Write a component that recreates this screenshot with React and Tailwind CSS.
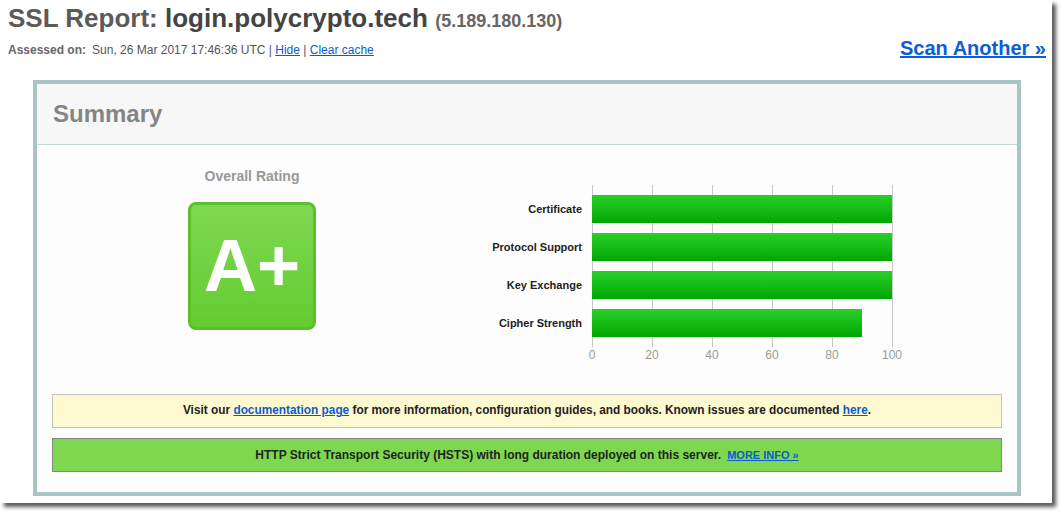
import React from 'react'

const bars = [
  { label: 'Certificate', value: 100 },
  { label: 'Protocol Support', value: 100 },
  { label: 'Key Exchange', value: 100 },
  { label: 'Cipher Strength', value: 90 },
]

const ticks = [0, 20, 40, 60, 80, 100]

const Chart = () => {
  return (
    <div className="flex mt-[17px]">
      {/* labels */}
      <div className="w-[125px] flex flex-col pt-[10px] pr-[10px]">
        {bars.map((b) => (
          <div key={b.label} className="h-[28px] mb-[10px] flex items-center justify-end text-[11px] font-bold text-[#222]">
            {b.label}
          </div>
        ))}
      </div>
      {/* plot */}
      <div className="flex flex-col">
        <div className="relative w-[300px] h-[162px]">
          {ticks.map((t) => (
            <div key={t} className="absolute top-0 bottom-0 w-px bg-[#c8c8c8]" style={{ left: `${t * 3}px` }} />
          ))}
          <div className="relative flex flex-col pt-[10px]">
            {bars.map((b) => (
              <div key={b.label} className="h-[28px] mb-[10px] bg-gradient-to-b from-[#26d126] to-[#00a600]" style={{ width: `${b.value * 3}px` }} />
            ))}
          </div>
        </div>
        <div className="relative h-[16px] w-[300px]">
          {ticks.map((t) => (
            <span key={t} className="absolute top-[1px] -translate-x-1/2 text-[12px] text-[#9a9a9a] leading-[14px]" style={{ left: `${t * 3}px` }}>
              {t}
            </span>
          ))}
        </div>
      </div>
    </div>
  )
}

const App = () => {
  return (
    <div className="w-[1062px] h-[515px] bg-white font-['Liberation_Sans',Arial,sans-serif]">
      <div className="relative w-[1052px] h-[503px] bg-white shadow-[4px_4px_4px_rgba(0,0,0,0.65)]">
        {/* header */}
        <div className="flex justify-between pl-[8px] pr-[6px]">
          <div className="flex flex-col">
            <h1 className="mt-[3px] text-[26px] font-bold leading-[30px] text-[#5b5b5b] whitespace-nowrap">
              SSL Report: <span className="text-[#444]">login.polycrypto.tech</span>{' '}
              <span className="text-[18px] text-[#666]">(5.189.180.130)</span>
            </h1>
            <div className="mt-[7px] text-[12px] leading-[15px] text-[#666] whitespace-nowrap">
              <span className="font-bold">Assessed on:</span>
              <span className="ml-[6px] text-[#555]">Sun, 26 Mar 2017 17:46:36 UTC</span>
              <span className="text-[#555]"> | </span>
              <a href="#" className="text-[#0a5ccc] underline">Hide</a>
              <span className="text-[#555]"> | </span>
              <a href="#" className="text-[#0a5ccc] underline">Clear cache</a>
            </div>
          </div>
          <a href="#" className="mt-[36px] text-[20px] font-bold leading-[24px] text-[#0b5ed7] underline h-[24px] whitespace-nowrap">
            Scan Another »
          </a>
        </div>

        {/* summary box */}
        <div className="ml-[33px] mt-[20px] w-[988px] h-[416px] border-[4px] border-[#a7c4c6] bg-[#fdfdfd] flex flex-col">
          <div className="h-[61px] bg-[#f7f7f7] border-b border-[#c4d8d8] flex items-center pl-[16px]">
            <h2 className="text-[24px] font-bold text-[#858585] leading-none">Summary</h2>
          </div>

          <div className="flex h-[249px] pt-[23px]">
            <div className="w-[430px] flex flex-col items-center">
              <div className="text-[14px] font-bold text-[#999] leading-[17px]">Overall Rating</div>
              <div className="mt-[17px] w-[128px] h-[128px] rounded-[8px] border-[3px] border-[#5cc02c] bg-gradient-to-b from-[#7fd851] to-[#63cc2f] flex items-center justify-center">
                <span className="text-[74px] font-bold leading-none text-white">A+</span>
              </div>
            </div>
            <Chart />
          </div>

          <div className="mx-[15px] h-[34px] border border-[#c2c2c2] bg-[#fff9d2] flex items-center justify-center text-[11.85px] font-bold text-[#222]">
            <span>
              Visit our <a href="#" className="text-[#0a5ccc] underline">documentation page</a> for more information, configuration guides, and books. Known issues are documented <a href="#" className="text-[#0a5ccc] underline">here</a>.
            </span>
          </div>

          <div className="mx-[15px] mt-[10px] h-[34px] border border-[#858585] bg-[#7dd84f] flex items-center justify-center text-[12px] font-bold text-[#222]">
            <span>
              HTTP Strict Transport Security (HSTS) with long duration deployed on this server.
              <a href="#" className="ml-[6px] text-[11px] text-[#0a5ccc] underline">MORE INFO »</a>
            </span>
          </div>
        </div>
      </div>
    </div>
  )
}

export default App
